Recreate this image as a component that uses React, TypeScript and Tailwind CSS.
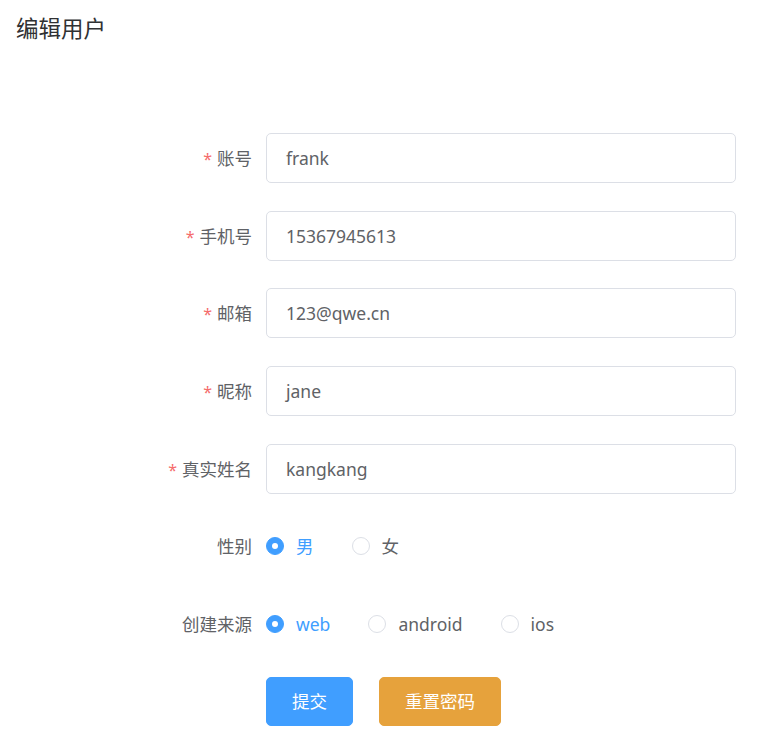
import React from "react";

const font = { fontFamily: '"Noto Sans", "Noto Sans CJK SC", sans-serif' };

function Field({ label, value, required = true }: { label: string; value: string; required?: boolean }) {
  return (
    <div className="flex items-center h-[50px]">
      <div className="w-[266px] pr-[14px] text-right text-[17.5px] text-[#606266]">
        {required && <span className="text-[#f56c6c] mr-[5px] text-[16px]">*</span>}
        {label}
      </div>
      <div className="w-[470px] h-[50px] border border-[#dcdfe6] rounded-[5px] flex items-center pl-[19px] text-[17.5px] text-[#606266]">
        {value}
      </div>
    </div>
  );
}

function Radio({ label, checked }: { label: string; checked?: boolean }) {
  return (
    <div className="flex items-center mr-[38px]">
      {checked ? (
        <span className="w-[18px] h-[18px] rounded-full bg-[#409eff] border border-[#409eff] flex items-center justify-center">
          <span className="w-[6px] h-[6px] rounded-full bg-white" />
        </span>
      ) : (
        <span className="w-[18px] h-[18px] rounded-full bg-white border border-[#dcdfe6]" />
      )}
      <span className={`ml-[12px] text-[17.5px] ${checked ? "text-[#409eff]" : "text-[#606266]"}`}>{label}</span>
    </div>
  );
}

function RadioRow({ label, options }: { label: string; options: { l: string; c?: boolean }[] }) {
  return (
    <div className="flex items-center h-[50px]">
      <div className="w-[266px] pr-[14px] text-right text-[17.5px] text-[#606266]">{label}</div>
      <div className="flex items-center">
        {options.map((o) => (
          <Radio key={o.l} label={o.l} checked={o.c} />
        ))}
      </div>
    </div>
  );
}

export default function App() {
  return (
    <div className="w-[775px] h-[746px] bg-white overflow-hidden" style={font}>
      <div className="pl-[16px] pt-[13px] h-[133px]">
        <h1 className="text-[22.5px] leading-[32px] text-[#303133] font-normal">编辑用户</h1>
      </div>
      <div className="flex flex-col gap-[27.7px]">
        <Field label="账号" value="frank" />
        <Field label="手机号" value="15367945613" />
        <Field label="邮箱" value="123@qwe.cn" />
        <Field label="昵称" value="jane" />
        <Field label="真实姓名" value="kangkang" />
        <RadioRow label="性别" options={[{ l: "男", c: true }, { l: "女" }]} />
        <RadioRow label="创建来源" options={[{ l: "web", c: true }, { l: "android" }, { l: "ios" }]} />
        <div className="flex items-center h-[49px] pl-[266px] gap-[26px]">
          <button className="h-[49px] px-[25px] rounded-[5px] bg-[#409eff] border border-[#409eff] text-white text-[17.5px]">提交</button>
          <button className="h-[49px] px-[25px] rounded-[5px] bg-[#e6a23c] border border-[#e6a23c] text-white text-[17.5px]">重置密码</button>
        </div>
      </div>
    </div>
  );
}
